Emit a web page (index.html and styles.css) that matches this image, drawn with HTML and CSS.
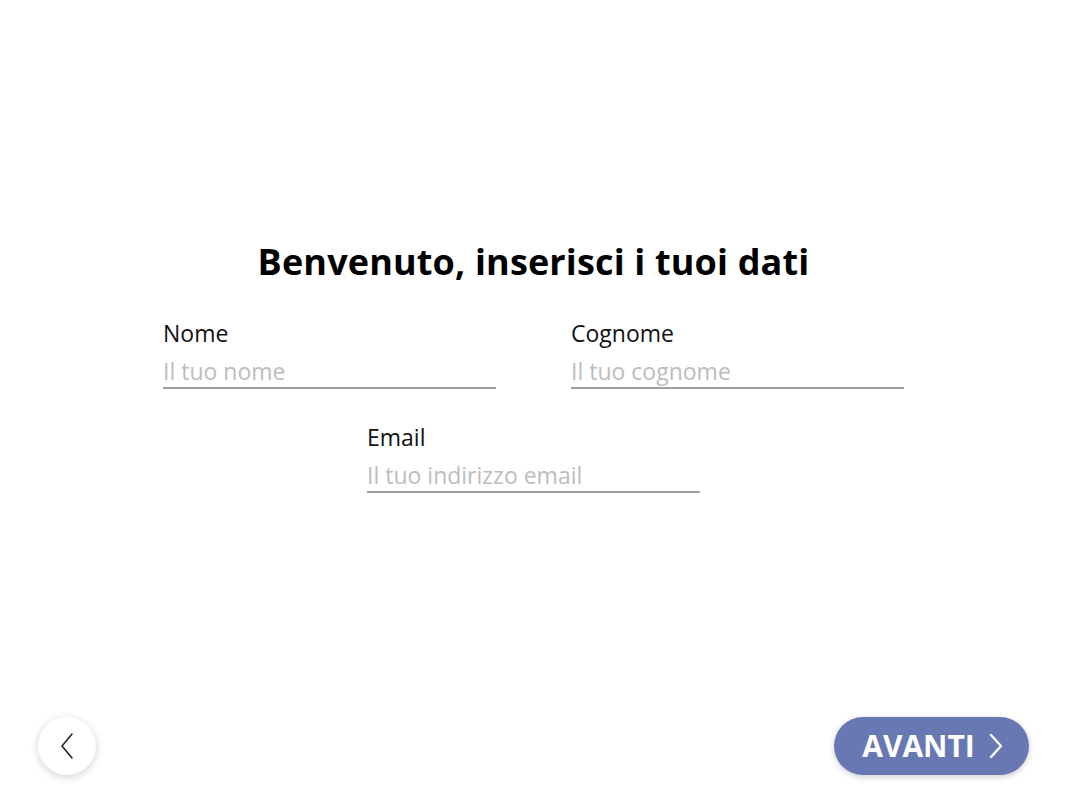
FILE: index.html
```html
<!DOCTYPE html>
<html lang="it">
<head>
<meta charset="utf-8">
<title>Benvenuto</title>
<link rel="stylesheet" href="styles.css">
</head>
<body>
<div class="page">
  <main class="main">
    <h1 class="title">Benvenuto, inserisci i tuoi dati</h1>
    <div class="form">
      <div class="row">
        <label class="field">
          <span class="label">Nome</span>
          <input class="input" type="text" placeholder="Il tuo nome">
        </label>
        <label class="field">
          <span class="label">Cognome</span>
          <input class="input" type="text" placeholder="Il tuo cognome">
        </label>
      </div>
      <div class="row single">
        <label class="field">
          <span class="label">Email</span>
          <input class="input" type="email" placeholder="Il tuo indirizzo email">
        </label>
      </div>
    </div>
  </main>
  <footer class="footer">
    <button class="back" type="button" aria-label="Indietro">
      <svg width="16" height="28" viewBox="0 0 16 28"><path d="M13 2 L3 14 L13 26" fill="none" stroke="#222" stroke-width="1.6" stroke-linecap="round" stroke-linejoin="round"/></svg>
    </button>
    <button class="next" type="button">
      <span class="next-text">AVANTI</span>
      <svg width="14" height="26" viewBox="0 0 14 26"><path d="M2 2 L12 13 L2 24" fill="none" stroke="#fff" stroke-width="2.4" stroke-linecap="round" stroke-linejoin="round"/></svg>
    </button>
  </footer>
</div>
</body>
</html>
```

FILE: styles.css
```css
* { box-sizing: border-box; }
html, body { margin: 0; padding: 0; background: #fff; }
body { font-family: "Open Sans", "Noto Sans", sans-serif; color: #111; }
.page { width: 1067px; height: 800px; display: flex; flex-direction: column; }
.main { flex: 1; display: flex; flex-direction: column; align-items: center; padding-top: 236px; }
.title { margin: 0; font-size: 36px; font-weight: 700; line-height: 52px; color: #000; letter-spacing: 0.15px; }
.form { margin-top: 30px; display: flex; flex-direction: column; align-items: center; gap: 33px; }
.row { display: flex; gap: 75px; }
.field { display: flex; flex-direction: column; width: 333px; }
.label { font-size: 23px; line-height: 30px; color: #111; }
.input { border: none; border-bottom: 2px solid #9d9ea6; outline: none; font-family: inherit; font-size: 23px; line-height: 30px; padding: 8px 0 1px; color: #111; background: transparent; }
.input::placeholder { color: #bdbdbd; }
.footer { display: flex; justify-content: space-between; align-items: center; padding: 0 38px 25px 38px; }
.back { width: 58px; height: 58px; border-radius: 50%; border: none; background: #fff; box-shadow: 0 2px 8px rgba(0,0,0,0.18); display: flex; align-items: center; justify-content: center; padding: 0; }
.next { height: 58px; width: 195px; border-radius: 29px; border: none; background: #6778b3; box-shadow: 0 2px 6px rgba(0,0,0,0.2); display: flex; align-items: center; justify-content: center; gap: 14px; color: #fff; padding: 0 0 0 2px; }
.next-text { font-family: "Open Sans", sans-serif; font-weight: 700; font-size: 30px; line-height: 1; }
```
